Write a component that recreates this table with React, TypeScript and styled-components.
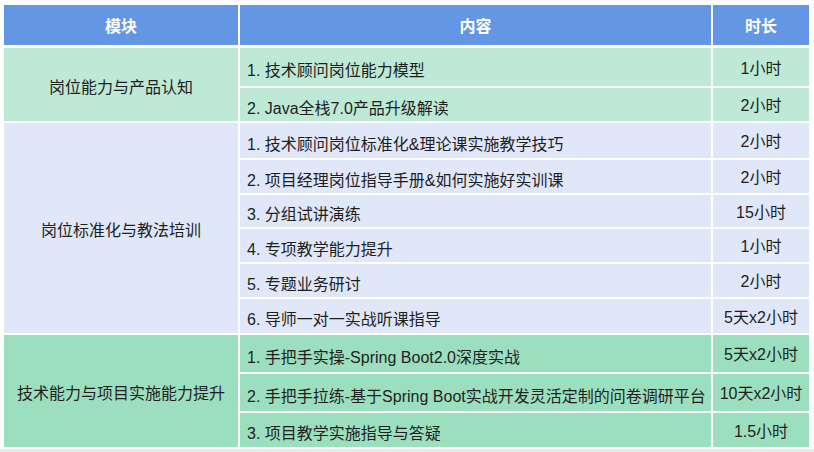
import React from "react";
import styled, { createGlobalStyle } from "styled-components";

const GlobalStyle = createGlobalStyle`
  html, body { margin: 0; padding: 0; background: #ffffff; }
  body {
    width: 814px;
    height: 452px;
    overflow: hidden;
    font-family: "Liberation Sans", Arial, "Noto Sans CJK SC", sans-serif;
  }
`;

const Page = styled.div`
  width: 814px;
  height: 452px;
  display: flex;
  flex-direction: column;
  background: #ffffff;
`;

const Frame = styled.div`
  padding: 3px 3px 0 2px;
  background: #ffffff;
`;

const BottomBand = styled.div`
  flex: 1;
  background: #e9e9e9;
`;

const Table = styled.table`
  border-collapse: separate;
  border-spacing: 2px;
  table-layout: fixed;
  width: 809px;
  background: #ffffff;
  font-size: 16px;
  color: #1e1e1e;
`;

const HeadCell = styled.th`
  height: 40px;
  padding: 0;
  background: #6497e3;
  color: #ffffff;
  font-weight: bold;
  text-align: center;
  vertical-align: middle;
  border-bottom: 1px solid #ffffff;
`;

type Tone = "mint" | "ice" | "green";
const tones: Record<Tone, string> = {
  mint: "#bde9d6",
  ice: "#dfe7f9",
  green: "#9cdfbf",
};

const ModuleCell = styled.td<{ $tone: Tone }>`
  background: ${(p) => tones[p.$tone]};
  text-align: center;
  vertical-align: middle;
  padding: 2px 0 0 0;
`;

const ContentCell = styled.td<{ $tone: Tone; $h: number }>`
  height: ${(p) => p.$h}px;
  background: ${(p) => tones[p.$tone]};
  text-align: left;
  vertical-align: middle;
  padding: 4px 0 0 7px;
  box-sizing: border-box;
  white-space: nowrap;
`;

const DurationCell = styled.td<{ $tone: Tone }>`
  background: ${(p) => tones[p.$tone]};
  text-align: center;
  vertical-align: middle;
  padding: 0 0 1px 0;
  white-space: nowrap;
`;

type Item = { text: string; time: string; h: number };
type Section = { name: string; tone: Tone; items: Item[] };

const sections: Section[] = [
  {
    name: "岗位能力与产品认知",
    tone: "mint",
    items: [
      { text: "1. 技术顾问岗位能力模型", time: "1小时", h: 38 },
      { text: "2. Java全栈7.0产品升级解读", time: "2小时", h: 33 },
    ],
  },
  {
    name: "岗位标准化与教法培训",
    tone: "ice",
    items: [
      { text: "1. 技术顾问岗位标准化&理论课实施教学技巧", time: "2小时", h: 35 },
      { text: "2. 项目经理岗位指导手册&如何实施好实训课", time: "2小时", h: 33 },
      { text: "3. 分组试讲演练", time: "15小时", h: 32 },
      { text: "4. 专项教学能力提升", time: "1小时", h: 33 },
      { text: "5. 专题业务研讨", time: "2小时", h: 33 },
      { text: "6. 导师一对一实战听课指导", time: "5天x2小时", h: 34 },
    ],
  },
  {
    name: "技术能力与项目实施能力提升",
    tone: "green",
    items: [
      { text: "1. 手把手实操-Spring Boot2.0深度实战", time: "5天x2小时", h: 37 },
      {
        text: "2. 手把手拉练-基于Spring Boot实战开发灵活定制的问卷调研平台",
        time: "10天x2小时",
        h: 37,
      },
      { text: "3. 项目教学实施指导与答疑", time: "1.5小时", h: 34 },
    ],
  },
];

export default function App() {
  return (
    <Page>
      <GlobalStyle />
      <Frame>
        <Table>
          <colgroup>
            <col style={{ width: 234 }} />
            <col style={{ width: 471 }} />
            <col style={{ width: 96 }} />
          </colgroup>
          <thead>
            <tr>
              <HeadCell>模块</HeadCell>
              <HeadCell>内容</HeadCell>
              <HeadCell>时长</HeadCell>
            </tr>
          </thead>
          <tbody>
            {sections.map((s) =>
              s.items.map((it, i) => (
                <tr key={s.name + i}>
                  {i === 0 && (
                    <ModuleCell $tone={s.tone} rowSpan={s.items.length}>
                      {s.name}
                    </ModuleCell>
                  )}
                  <ContentCell $tone={s.tone} $h={it.h}>
                    {it.text}
                  </ContentCell>
                  <DurationCell $tone={s.tone}>{it.time}</DurationCell>
                </tr>
              ))
            )}
          </tbody>
        </Table>
      </Frame>
      <BottomBand />
    </Page>
  );
}
